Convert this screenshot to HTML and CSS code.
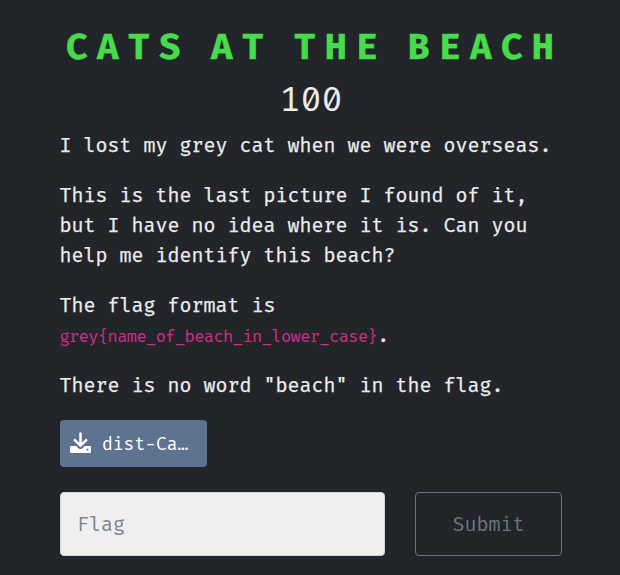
FILE: index.html
```html
<!DOCTYPE html>
<html lang="en">
<head>
<meta charset="utf-8">
<title>Cats at the beach</title>
<link rel="stylesheet" href="styles.css">
</head>
<body>
<main class="challenge">
  <h2 class="name">CATS AT THE BEACH</h2>
  <h3 class="value">100</h3>
  <div class="description">
    <p>I lost my grey cat when we were overseas.</p>
    <p>This is the last picture I found of it, but I have no idea where it is. Can you help me identify this beach?</p>
    <p>The flag format is <code>grey{name_of_beach_in_lower_case}</code>.</p>
    <p>There is no word "beach" in the flag.</p>
  </div>
  <a class="file" href="#">
    <svg class="icon" viewBox="0 0 21 21" aria-hidden="true">
      <path d="M10.5 1.5v11M4.8 8.200l5.700 5.500 5.700-5.500" fill="none" stroke="#fff" stroke-width="2.5" stroke-linecap="round" stroke-linejoin="round"/>
      <path fill="#fff" fill-rule="evenodd" d="M1.200 14h4.900l2.700 2.600q1.700 1.500 3.400 0L14.900 14h4.900q1.200 0 1.200 1.200v4.600q0 1.200-1.200 1.200H1.200Q0 21 0 19.800v-4.600Q0 14 1.200 14zM17.500 16.600a1 1 0 1 0 .01 0z"/>
    </svg>
    <span>dist-Ca…</span>
  </a>
  <form class="answer">
    <input class="flag" type="text" placeholder="Flag" aria-label="Flag">
    <button class="submit" type="button">Submit</button>
  </form>
</main>
</body>
</html>
```
FILE: styles.css
```css
* { box-sizing: border-box; }
body {
  margin: 0;
  min-height: 575px;
  background: #222529;
  color: #ececec;
  font: 20px/30px "Fira Mono", "Fira Code", monospace;
  overflow: hidden;
}
.challenge { width: 502px; margin-left: 60px; padding-top: 26px; }
.name {
  margin: 0 0 0 6px;
  color: #48db4b;
  font-size: 36px;
  line-height: 43px;
  font-weight: 700;
  letter-spacing: 9.4px;
  word-spacing: -10px;
  white-space: nowrap;
  -webkit-text-stroke: 0.3px;
}
.value {
  margin: 9px 0;
  text-align: center;
  font-size: 35px;
  line-height: 43px;
  font-weight: 400;
  font-feature-settings: "zero";
}
.description {
  margin-left: -0.6px;
  -webkit-text-stroke: 0.25px;
}
.description p { margin: 0 0 20px; }
.description code {
  -webkit-text-stroke: 0;
  color: #d12f85;
  font-family: "Fira Mono", "Fira Code", monospace;
  font-size: 17px;
  font-weight: 300;
  line-height: 1;
  letter-spacing: -0.57px;
}
.file {
  display: flex;
  align-items: center;
  gap: 11px;
  width: 147px;
  height: 47px;
  padding-left: 10px;
  border-radius: 4px;
  background: #5e7390;
  color: #fff;
  font-size: 18px;
  text-decoration: none;
}
.icon { width: 21px; height: 21px; margin-top: -3px; }
.answer { display: flex; gap: 30px; margin-top: 25px; }
.flag, .submit {
  height: 64px;
  border-radius: 4px;
  font: inherit;
}
.flag {
  width: 325px;
  padding: 0 16px;
  border: 1px solid #ced4da;
  background: #efefef;
  color: #495057;
}
.flag::placeholder { color: #7b858e; opacity: 1; }
.submit {
  width: 147px;
  padding: 0;
  border: 1px solid #6c757d;
  background: transparent;
  color: #6c757d;
}
```
